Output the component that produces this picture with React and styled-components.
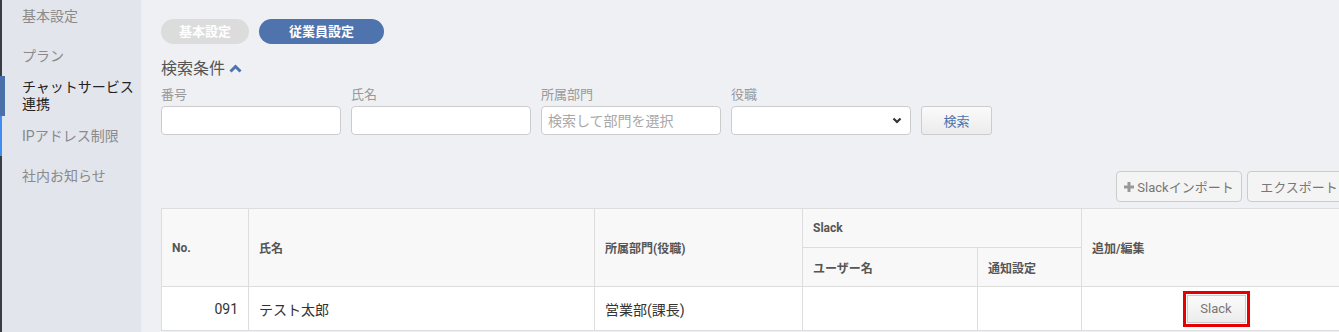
import React from 'react';
import styled, { createGlobalStyle } from 'styled-components';

var GlobalStyle = createGlobalStyle`
  html, body {
    margin: 0;
    padding: 0;
    overflow: hidden;
    font-family: Roboto, "Noto Sans CJK JP", sans-serif;
  }
  * { box-sizing: border-box; }
`;

var menu = [
  { label: '基本設定' },
  { label: 'プラン' },
  { label: 'チャットサービス\n連携', active: true },
  { label: 'IPアドレス制限', hover: true },
  { label: '社内お知らせ' },
];

var columns = [
  { key: 'no', label: 'No.', width: 87 },
  { key: 'name', label: '氏名', width: 346 },
  { key: 'dept', label: '所属部門(役職)', width: 208 },
  { key: 'user', width: 175 },
  { key: 'notify', width: 104 },
  { key: 'edit', label: '追加/編集' },
];

var App = () => {
  return (
    <Page>
      <GlobalStyle />
      <Sidebar>
        <MenuList>
          {menu.map((item, i) => (
            <MenuItem key={i} $active={item.active} $hover={item.hover}>
              {item.label.split('\n').map((line, j) => <span key={j}>{line}</span>)}
            </MenuItem>
          ))}
        </MenuList>
      </Sidebar>
      <Main>
        <Tabs>
          <Pill>基本設定</Pill>
          <Pill $active>従業員設定</Pill>
        </Tabs>
        <Heading>
          検索条件
          <svg width="13" height="9" viewBox="0 0 13 9">
            <polyline points="1.5,7.5 6.5,2.5 11.5,7.5" fill="none" stroke="#4f73ad" strokeWidth="3" />
          </svg>
        </Heading>
        <Filters>
          <Field>
            <Label>番号</Label>
            <Input />
          </Field>
          <Field>
            <Label>氏名</Label>
            <Input />
          </Field>
          <Field>
            <Label>所属部門</Label>
            <Input placeholder="検索して部門を選択" />
          </Field>
          <Field>
            <Label>役職</Label>
            <Select>
              <svg width="10" height="7" viewBox="0 0 10 7">
                <polyline points="1.5,1.5 5,5 8.5,1.5" fill="none" stroke="#333" strokeWidth="2.2" />
              </svg>
            </Select>
          </Field>
          <SearchButton>検索</SearchButton>
        </Filters>
        <Toolbar>
          <ToolButton $width={126}>
            <svg width="10" height="10" viewBox="0 0 10 10">
              <path d="M5 0v10M0 5h10" stroke="#999" strokeWidth="3" />
            </svg>
            Slackインポート
          </ToolButton>
          <ToolButton $width={104}>エクスポート</ToolButton>
        </Toolbar>
        <Table>
          <colgroup>
            {columns.map((c) => <col key={c.key} style={c.width ? { width: c.width } : null} />)}
          </colgroup>
          <thead>
            <tr>
              <Th rowSpan={2}>{columns[0].label}</Th>
              <Th rowSpan={2}>{columns[1].label}</Th>
              <Th rowSpan={2}>{columns[2].label}</Th>
              <Th colSpan={2}>Slack</Th>
              <Th rowSpan={2}>{columns[5].label}</Th>
            </tr>
            <tr>
              <Th>ユーザー名</Th>
              <Th>通知設定</Th>
            </tr>
          </thead>
          <tbody>
            <tr>
              <Td $align="right">091</Td>
              <Td>テスト太郎</Td>
              <Td>営業部(課長)</Td>
              <Td />
              <Td />
              <Td $align="center">
                <SlackButton>Slack</SlackButton>
              </Td>
            </tr>
          </tbody>
        </Table>
      </Main>
    </Page>
  );
};

var Page = styled.div`
  display: flex;
  width: 1339px;
  height: 332px;
  background: #eff0f4;
  overflow: hidden;
`;

var Sidebar = styled.nav`
  flex: 0 0 141px;
  background: #e2e5ec;
  border-left: 2px solid #3a3d45;
`;

var MenuList = styled.ul`
  list-style: none;
  margin: -4px 0 0 -2px;
  padding: 0;
`;

var MenuItem = styled.li`
  display: flex;
  flex-direction: column;
  justify-content: center;
  height: 40px;
  font-size: 14px;
  line-height: ${(p) => (p.$active ? '17px' : '20px')};
  color: ${(p) => (p.$active ? '#222' : '#8a8a8a')};
  border-left: ${(p) => (p.$active ? '5px solid #4b6fa9' : p.$hover ? '2px solid #3f8cf2' : '2px solid transparent')};
  padding-left: ${(p) => (p.$active ? '17px' : '20px')};
`;

var Main = styled.main`
  flex: 0 0 1210px;
  padding: 19px 0 0 20px;
`;

var Tabs = styled.div`
  display: flex;
  gap: 10px;
`;

var Pill = styled.div`
  width: ${(p) => (p.$active ? '125px' : '88px')};
  height: 25px;
  border-radius: 13px;
  background: ${(p) => (p.$active ? '#4f73ad' : '#dcdcdc')};
  color: #fff;
  font-size: 13px;
  font-weight: bold;
  line-height: 25px;
  text-align: center;
`;

var Heading = styled.div`
  display: flex;
  align-items: center;
  gap: 4px;
  margin-top: 15px;
  font-size: 16px;
  line-height: 20px;
  color: #555;

  svg {
    margin-top: -2px;
  }
`;

var Filters = styled.div`
  display: flex;
  align-items: flex-end;
  gap: 10px;
  margin-top: 8px;
`;

var Field = styled.div`
  display: flex;
  flex-direction: column;
  gap: 3px;
`;

var Label = styled.label`
  font-size: 13px;
  line-height: 16px;
  color: #999;
`;

var Input = styled.input`
  width: 180px;
  height: 29px;
  border: 1px solid #ccc;
  border-radius: 4px;
  background: #fff;
  padding: 0 6px;
  font-family: inherit;
  font-size: 14px;

  &::placeholder {
    color: #a8a8a8;
  }
`;

var Select = styled.div`
  display: flex;
  align-items: center;
  justify-content: flex-end;
  width: 180px;
  height: 29px;
  padding-right: 8px;
  border: 1px solid #ccc;
  border-radius: 4px;
  background: #fff;
`;

var SearchButton = styled.button`
  width: 71px;
  height: 29px;
  border: 1px solid #ccc;
  border-radius: 3px;
  background: linear-gradient(#fafafa, #ececec);
  color: #4f73ad;
  font-family: inherit;
  font-size: 13px;
`;

var Toolbar = styled.div`
  display: flex;
  justify-content: flex-end;
  gap: 5px;
  margin-top: 36px;
  width: 1190px;
`;

var ToolButton = styled.button`
  display: flex;
  align-items: center;
  justify-content: center;
  gap: 3px;
  width: ${(p) => p.$width}px;
  height: 31px;
  border: 1px solid #ccc;
  border-radius: 4px;
  background: #f4f4f4;
  color: #777;
  font-family: inherit;
  font-size: 13px;
`;

var Table = styled.table`
  width: 1190px;
  margin-top: 6px;
  border-collapse: collapse;
  table-layout: fixed;
  background: #fff;
`;

var Th = styled.th`
  height: 39px;
  padding: 0 10px;
  border: 1px solid #ddd;
  background: #f8f8f8;
  color: #555;
  font-size: 12px;
  font-weight: bold;
  text-align: left;
`;

var Td = styled.td`
  height: 44px;
  padding: 0 10px;
  border: 1px solid #ddd;
  color: #333;
  font-size: 14px;
  text-align: ${(p) => p.$align || 'left'};
`;

var SlackButton = styled.button`
  width: 59px;
  height: 28px;
  border: 1px solid #ccc;
  border-radius: 0;
  background: linear-gradient(#fbfbfb, #ececec);
  color: #777;
  font-family: inherit;
  font-size: 13px;
  outline: 3px solid #e60000;
  outline-offset: 1px;
`;

export default App;
